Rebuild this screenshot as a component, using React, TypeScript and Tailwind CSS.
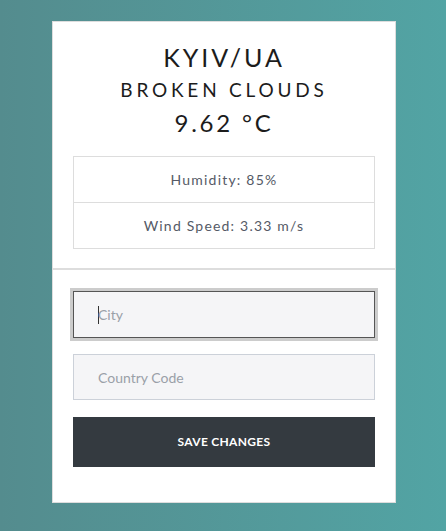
import React from "react";

export default function App() {
  return (
    <div
      className="w-[446px] h-[531px] overflow-hidden bg-gradient-to-r from-[#548c8e] to-[#52a4a4] pt-[21px]"
      style={{ fontFamily: "Lato, 'Open Sans', sans-serif" }}
    >
      <div className="ml-[52px] w-[344px] h-[482px] bg-white border border-[#dddddd] flex flex-col">
        <div className="flex flex-col items-center pt-[18px]">
          <div className="text-[25px] leading-[34px] tracking-[3px] text-[#1c1c1c]">KYIV/UA</div>
          <div className="text-[19px] leading-[28px] tracking-[3.8px] text-[#1c1c1c] mt-[2px]">BROKEN CLOUDS</div>
          <div className="text-[24px] leading-[34px] tracking-[2.8px] text-[#1c1c1c] mt-[2px]">9.62 °C</div>
        </div>
        <div className="mx-[20px] mt-[16px] border border-[#dddddd] text-[#555a66] text-[14px] tracking-[1.2px]">
          <div className="h-[46px] flex items-center justify-center border-b border-[#dddddd]">Humidity: 85%</div>
          <div className="h-[45px] flex items-center justify-center">Wind Speed: 3.33 m/s</div>
        </div>
        <div className="mt-[19px] h-[2px] bg-[#dddddd]" />
        <div className="px-[20px] pt-[21px] flex flex-col">
          <div className="h-[47px] bg-[#f5f5f7] border border-[#555555] outline outline-[3px] outline-[#cccccc] flex items-center pl-[24px] text-[14px] text-[#9aa0a8]">
            <span className="w-px h-[18px] bg-[#333] mr-[-1px]" />
            <span>City</span>
          </div>
          <div className="mt-[16px] h-[46px] bg-[#f5f5f7] border border-[#ccd1d9] flex items-center pl-[24px] text-[14px] text-[#9aa0a8]">
            Country Code
          </div>
          <div className="mt-[17px] h-[50px] bg-[#343a40] flex items-center justify-center text-white text-[12px] font-bold tracking-[0.3px]">
            SAVE CHANGES
          </div>
        </div>
      </div>
    </div>
  );
}
